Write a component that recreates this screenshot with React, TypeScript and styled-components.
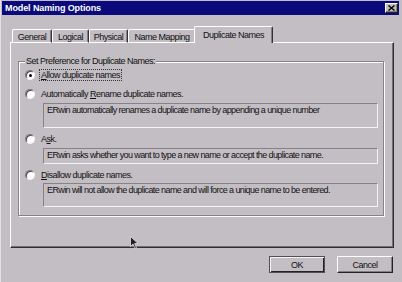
import React from 'react'
import styled, { createGlobalStyle } from 'styled-components'

const GlobalStyle = createGlobalStyle`
  html, body {
    margin: 0;
    padding: 0;
    background: #c3bec3;
  }
  body {
    font-family: "Liberation Sans", Arial, sans-serif;
    font-size: 9px;
    letter-spacing: -0.5px;
    color: #111;
  }
`

const Frame = styled.div`
  position: relative;
  width: 402px;
  height: 282px;
  box-sizing: border-box;
  padding: 1px 3px 0 1px;
  border-left: 1px solid #e4e0e4;
  background: #c3bec3;
  overflow: hidden;
`

const TitleBar = styled.div`
  height: 14px;
  display: flex;
  align-items: center;
  justify-content: space-between;
  padding: 0 1px 0 3px;
  background: #0a0a7c;
`

const Title = styled.span`
  color: #fff;
  font-weight: bold;
  letter-spacing: -0.1px;
`

const CloseBtn = styled.div`
  width: 13px;
  height: 10px;
  box-sizing: border-box;
  display: flex;
  align-items: center;
  justify-content: center;
  background: #c3bec3;
  border: 1px solid;
  border-color: #fff #222 #222 #fff;
  box-shadow: inset -1px -1px #808080;
`

const Content = styled.div`
  width: 384px;
  margin: 11px 0 0 8px;
`

const TabStrip = styled.div`
  display: flex;
  align-items: flex-end;
  height: 17px;
  padding-left: 2px;
  margin-bottom: -1px;
  position: relative;
  z-index: 1;
`

const Tab = styled.div<{ $w: number; $active?: boolean }>`
  width: ${p => p.$w}px;
  height: ${p => (p.$active ? 17 : 14)}px;
  margin: ${p => (p.$active ? '0 -2px' : '0')};
  box-sizing: border-box;
  display: flex;
  justify-content: center;
  padding-top: ${p => (p.$active ? 3 : 2)}px;
  background: #c3bec3;
  border: 1px solid;
  border-color: #fff #333 transparent #fff;
  border-bottom: ${p => (p.$active ? 'none' : '1px solid #fff')};
  border-radius: 2px 2px 0 0;
  box-shadow: inset -1px 0 #808080;
  position: relative;
  z-index: ${p => (p.$active ? 2 : 0)};
`

const Panel = styled.div`
  width: 384px;
  height: 206px;
  box-sizing: border-box;
  padding: 18px 0 0 7px;
  border: 1px solid;
  border-color: #fff #303030 #303030 #fff;
  box-shadow: inset -1px -1px #707070;
`

const Group = styled.div`
  position: relative;
  width: 366px;
  box-sizing: border-box;
  padding: 7px 0 8px 6px;
  border: 1px solid #868286;
  box-shadow: inset 1px 1px #fff, 1px 1px #fff;
  display: flex;
  flex-direction: column;
`

const Legend = styled.span`
  position: absolute;
  top: -6px;
  left: 6px;
  padding: 0 1px;
  background: #c3bec3;
  line-height: 11px;
`

const RadioRow = styled.div<{ $top: number }>`
  display: flex;
  align-items: center;
  height: 12px;
  margin-top: ${p => p.$top}px;
  gap: 4px;
`

const Radio = styled.span<{ $checked?: boolean }>`
  width: 10px;
  height: 10px;
  box-sizing: border-box;
  border-radius: 50%;
  border: 1px solid;
  border-color: #7a767a #f4f4f4 #f4f4f4 #7a767a;
  background: #fff;
  box-shadow: inset 1px 1px #4a4a4a;
  display: flex;
  align-items: center;
  justify-content: center;
  &::after {
    content: '';
    display: ${p => (p.$checked ? 'block' : 'none')};
    width: 3px;
    height: 3px;
    border-radius: 50%;
    background: #000;
    margin: 1px 0 0 1px;
  }
`

const Label = styled.span<{ $focus?: boolean }>`
  line-height: 10px;
  padding: 0 1px;
  border: 1px dotted ${p => (p.$focus ? '#333' : 'transparent')};
`

const Desc = styled.div<{ $h: number; $top: number }>`
  width: 335px;
  height: ${p => p.$h}px;
  margin: ${p => p.$top}px 0 0 18px;
  box-sizing: border-box;
  padding: 1px 3px;
  line-height: 11px;
  letter-spacing: -0.6px;
  border: 1px solid;
  border-color: #868286 #f4f4f4 #f4f4f4 #868286;
`

const ButtonRow = styled.div`
  display: flex;
  justify-content: flex-end;
  gap: 12px;
  margin-top: 8px;
  padding-right: 1px;
`

const Button = styled.div<{ $default?: boolean }>`
  width: 56px;
  height: 17px;
  box-sizing: border-box;
  display: flex;
  align-items: center;
  justify-content: center;
  border: 1px solid;
  border-color: ${p => (p.$default ? '#505050' : '#fff #222 #222 #fff')};
  box-shadow: ${p =>
    p.$default
      ? 'inset 1px 1px #f4f4f4, inset -1px -1px #222'
      : 'inset -1px -1px #808080'};
`

const Cursor = styled.svg`
  position: absolute;
  left: 129px;
  top: 236px;
`

export default function App() {
  return (
    <Frame>
      <GlobalStyle />
      <TitleBar>
        <Title>Model Naming Options</Title>
        <CloseBtn>
          <svg width="7" height="6" viewBox="0 0 7 6">
            <path d="M0.5 0.5 L6.5 5.5 M6.5 0.5 L0.5 5.5" stroke="#000" strokeWidth="1.4" />
          </svg>
        </CloseBtn>
      </TitleBar>
      <Content>
        <TabStrip>
          <Tab $w={40}>General</Tab>
          <Tab $w={37}>Logical</Tab>
          <Tab $w={39}>Physical</Tab>
          <Tab $w={68}>Name Mapping</Tab>
          <Tab $w={79} $active>Duplicate Names</Tab>
        </TabStrip>
        <Panel>
          <Group>
            <Legend>Set Preference for Duplicate Names:</Legend>
            <RadioRow $top={0}>
              <Radio $checked />
              <Label $focus><u>A</u>llow duplicate names</Label>
            </RadioRow>
            <RadioRow $top={7}>
              <Radio />
              <Label>Automatically <u>R</u>ename duplicate names.</Label>
            </RadioRow>
            <Desc $h={25} $top={3}>
              ERwin automatically renames a duplicate name by appending a unique number
            </Desc>
            <RadioRow $top={5}>
              <Radio />
              <Label>A<u>s</u>k.</Label>
            </RadioRow>
            <Desc $h={16} $top={3}>
              ERwin asks whether you want to type a new name or accept the duplicate name.
            </Desc>
            <RadioRow $top={5}>
              <Radio />
              <Label><u>D</u>isallow duplicate names.</Label>
            </RadioRow>
            <Desc $h={24} $top={2}>
              ERwin will not allow the duplicate name and will force a unique name to be entered.
            </Desc>
          </Group>
        </Panel>
        <ButtonRow>
          <Button $default>OK</Button>
          <Button>Cancel</Button>
        </ButtonRow>
      </Content>
      <Cursor width="9" height="14" viewBox="0 0 9 14">
        <path d="M0.5 0.5 L0.5 10.5 L3 8 L5 12.5 L6.5 12 L4.6 7.5 L8 7.5 Z" fill="#222" stroke="#eee" strokeWidth="0.7" />
      </Cursor>
    </Frame>
  )
}
